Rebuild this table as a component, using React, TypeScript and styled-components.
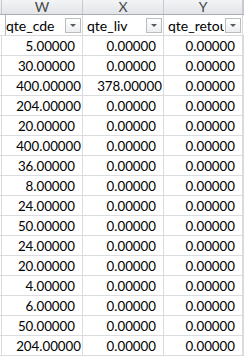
import styled, { createGlobalStyle } from 'styled-components';

const GlobalStyle = createGlobalStyle`
  html, body {
    margin: 0;
    padding: 0;
    background: #ffffff;
  }
  body {
    font-family: 'Lato', 'Liberation Sans', sans-serif;
    font-size: 13.3px;
    color: #000000;
  }
`;

const COLUMNS = '2px 81px 81px 79px 1fr';

const Sheet = styled.div`
  width: 244px;
  height: 358px;
  overflow: hidden;
  display: flex;
  flex-direction: column;
`;

const HeaderRow = styled.div`
  display: grid;
  grid-template-columns: ${COLUMNS};
  height: 15px;
  background: linear-gradient(#f3f4f6, #e2e4e8);
  border-bottom: 1px solid #a9adb3;
  box-sizing: border-box;
`;

const ColumnLetter = styled.div`
  display: flex;
  align-items: center;
  justify-content: center;
  border-right: 1px solid #c6c9ce;
  color: #4a4a4a;
  font-size: 14px;
  line-height: 14px;
`;

const FilterRow = styled.div`
  display: grid;
  grid-template-columns: ${COLUMNS};
  height: 21px;
  border-bottom: 1px solid #d8d9db;
  box-sizing: border-box;
`;

const FilterCell = styled.div<{ $edge?: boolean }>`
  display: flex;
  align-items: center;
  gap: 1px;
  min-width: 0;
  padding: 0 1px 0 4px;
  border-right: 1px solid ${(p) => (p.$edge ? '#b4b7bb' : '#d8d9db')};
  box-sizing: border-box;
  overflow: hidden;
`;

const FieldName = styled.span`
  flex: 1;
  min-width: 0;
  overflow: hidden;
  white-space: nowrap;
  font-size: 14px;
  line-height: 19px;
`;

const FilterButton = styled.div`
  flex: none;
  width: 16px;
  height: 15px;
  box-sizing: border-box;
  border: 1px solid #b9bcc1;
  background: linear-gradient(#ffffff, #eceef1);
  display: flex;
  align-items: center;
  justify-content: center;
`;

const Arrow = styled.span`
  width: 0;
  height: 0;
  border-left: 3px solid transparent;
  border-right: 3px solid transparent;
  border-top: 3px solid #555a60;
  margin-top: 1px;
`;

const DataRow = styled.div`
  display: grid;
  grid-template-columns: ${COLUMNS};
  height: 20px;
  border-bottom: 1px solid #dadbdc;
  box-sizing: border-box;
  flex: none;
`;

const Cell = styled.div<{ $wide?: boolean }>`
  border-right: 1px solid #dadbdc;
  text-align: right;
  padding-right: ${(p) => (p.$wide ? '1px' : '7px')};
  line-height: 20px;
  white-space: nowrap;
  overflow: hidden;
  box-sizing: border-box;
`;

const Blank = styled.div`
  border-right: 1px solid #dadbdc;
`;

const fields = ['qte_cde', 'qte_liv', 'qte_retour'];

const rows: [string, string, string][] = [
  ['5.00000', '0.00000', '0.00000'],
  ['30.00000', '0.00000', '0.00000'],
  ['400.00000', '378.00000', '0.00000'],
  ['204.00000', '0.00000', '0.00000'],
  ['20.00000', '0.00000', '0.00000'],
  ['400.00000', '0.00000', '0.00000'],
  ['36.00000', '0.00000', '0.00000'],
  ['8.00000', '0.00000', '0.00000'],
  ['24.00000', '0.00000', '0.00000'],
  ['50.00000', '0.00000', '0.00000'],
  ['24.00000', '0.00000', '0.00000'],
  ['20.00000', '0.00000', '0.00000'],
  ['4.00000', '0.00000', '0.00000'],
  ['6.00000', '0.00000', '0.00000'],
  ['50.00000', '0.00000', '0.00000'],
  ['204.00000', '0.00000', '0.00000'],
];

export default function App() {
  return (
    <>
      <GlobalStyle />
      <Sheet>
        <HeaderRow>
          <ColumnLetter />
          {['W', 'X', 'Y'].map((l) => (
            <ColumnLetter key={l}>{l}</ColumnLetter>
          ))}
          <ColumnLetter />
        </HeaderRow>
        <FilterRow>
          <FilterCell $edge />
          {fields.map((f) => (
            <FilterCell key={f}>
              <FieldName>{f}</FieldName>
              <FilterButton>
                <Arrow />
              </FilterButton>
            </FilterCell>
          ))}
          <FilterCell />
        </FilterRow>
        {rows.map((r, i) => (
          <DataRow key={`row-${i}`}>
            <Blank />
            {r.map((v, j) => (
              <Cell key={j} $wide={v.length > 8}>
                {v}
              </Cell>
            ))}
            <Blank />
          </DataRow>
        ))}
      </Sheet>
    </>
  );
}
